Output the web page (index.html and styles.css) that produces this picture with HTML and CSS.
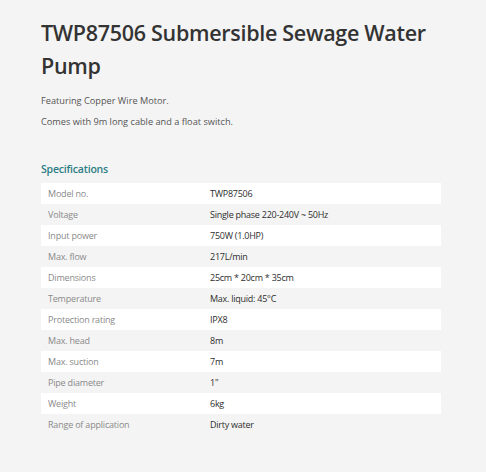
FILE: index.html
```html
<!DOCTYPE html>
<html>
<head>
<meta charset="utf-8">
<link rel="stylesheet" href="styles.css">
</head>
<body>
<main class="page">
  <h1 class="title">TWP87506 Submersible Sewage Water Pump</h1>
  <p class="lead first">Featuring Copper Wire Motor.</p>
  <p class="lead">Comes with 9m long cable and a float switch.</p>
  <h2 class="section">Specifications</h2>
  <table class="specs">
    <tr><td class="k">Model no.</td><td class="v">TWP87506</td></tr>
    <tr><td class="k">Voltage</td><td class="v">Single phase 220-240V ~ 50Hz</td></tr>
    <tr><td class="k">Input power</td><td class="v">750W (1.0HP)</td></tr>
    <tr><td class="k">Max. flow</td><td class="v">217L/min</td></tr>
    <tr><td class="k">Dimensions</td><td class="v">25cm * 20cm * 35cm</td></tr>
    <tr><td class="k">Temperature</td><td class="v">Max. liquid: 45°C</td></tr>
    <tr><td class="k">Protection rating</td><td class="v">IPX8</td></tr>
    <tr><td class="k">Max. head</td><td class="v">8m</td></tr>
    <tr><td class="k">Max. suction</td><td class="v">7m</td></tr>
    <tr><td class="k">Pipe diameter</td><td class="v">1"</td></tr>
    <tr><td class="k">Weight</td><td class="v">6kg</td></tr>
    <tr><td class="k">Range of application</td><td class="v">Dirty water</td></tr>
  </table>
</main>
</body>
</html>
```
FILE: styles.css
```css
html, body {
  margin: 0;
  padding: 0;
  background: #f4f4f4;
}
body {
  font-family: "Open Sans", "Liberation Sans", sans-serif;
  color: #444;
}
.page {
  padding: 16px 20px 0 41px;
}
.title {
  margin: 0;
  font-size: 21.5px;
  line-height: 33px;
  font-weight: 600;
  color: #333;
  letter-spacing: -0.3px;
}
.lead {
  margin: 0;
  font-size: 9.2px;
  line-height: 20.5px;
  color: #555;
}
.lead.first {
  margin-top: 9px;
}
.section {
  margin: 29px 0 0;
  font-size: 10.5px;
  line-height: 16px;
  font-weight: 600;
  color: #2c7d84;
  letter-spacing: -0.2px;
}
.specs {
  margin-top: 6px;
  width: 400px;
  border-collapse: collapse;
  font-size: 9px;
}
.specs td {
  height: 21px;
  padding: 0 7px;
  vertical-align: middle;
}
.specs tr:nth-child(odd) td {
  background: #fff;
}
.specs .k {
  width: 148px;
  color: #8a8a8a;
  letter-spacing: -0.2px;
}
.specs .v {
  color: #2e2e2e;
  letter-spacing: -0.25px;
}
```
